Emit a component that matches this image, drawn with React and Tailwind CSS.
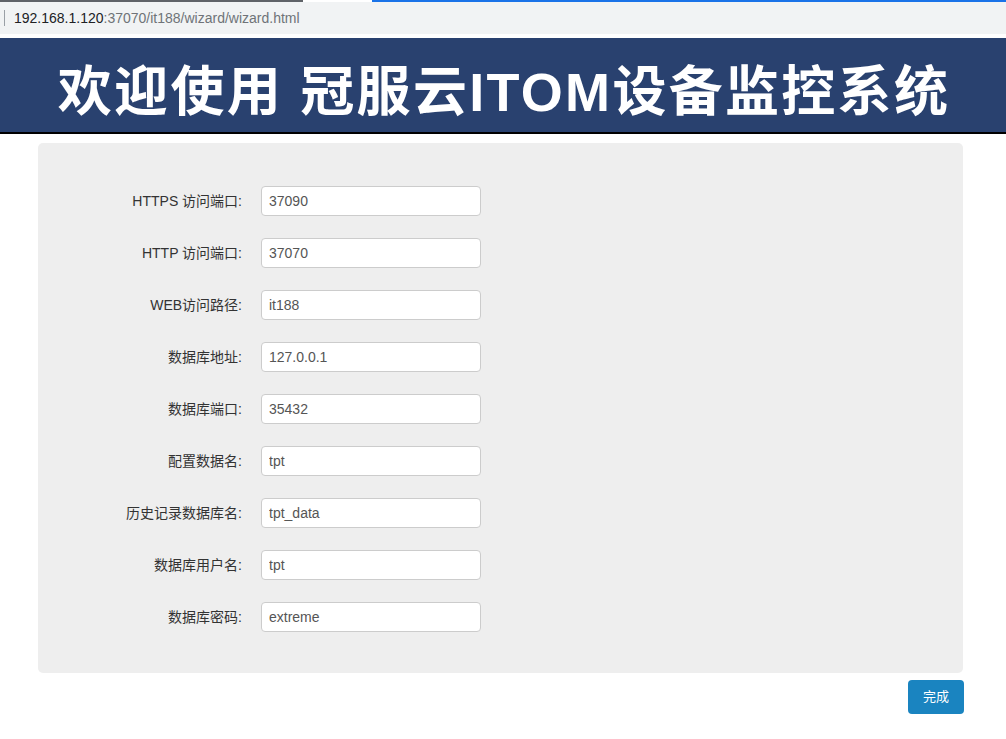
import React from 'react';

const fields = [
  { label: 'HTTPS 访问端口:', value: '37090' },
  { label: 'HTTP 访问端口:', value: '37070' },
  { label: 'WEB访问路径:', value: 'it188' },
  { label: '数据库地址:', value: '127.0.0.1' },
  { label: '数据库端口:', value: '35432' },
  { label: '配置数据名:', value: 'tpt' },
  { label: '历史记录数据库名:', value: 'tpt_data' },
  { label: '数据库用户名:', value: 'tpt' },
  { label: '数据库密码:', value: 'extreme' },
];

const font = { fontFamily: '"Liberation Sans", "Noto Sans CJK SC", sans-serif' };

const App = () => {
  return (
    <div className="min-h-screen bg-white text-[#333]" style={font}>
      {/* browser strip */}
      <div className="flex h-[2px]">
        <div className="w-[303px] bg-[#5f6368]"></div>
        <div className="w-[69px] bg-white"></div>
        <div className="flex-1 bg-[#1a73e8]"></div>
      </div>

      {/* address bar */}
      <div className="flex h-[32px] items-center bg-[#f1f3f4]">
        <div className="ml-[4px] h-[16px] w-px bg-[#9aa0a6]"></div>
        <div className="ml-[9px] text-[14px] leading-none">
          <span className="text-[#202124]">192.168.1.120</span>
          <span className="text-[#6f7378]">:37070/it188/wizard/wizard.html</span>
        </div>
      </div>
      <div className="h-[4px] bg-white"></div>

      {/* header */}
      <div className="flex h-[96px] items-center justify-center border-b-2 border-black bg-[#29416f] pt-[14px]">
        <h1 className="pl-[2px] text-[54px] font-bold leading-none tracking-[2.3px] text-white">
          欢迎使用 冠服云ITOM设备监控系统
        </h1>
      </div>

      {/* form panel */}
      <div className="ml-[38px] mr-[43px] mt-[9px] flex flex-col gap-[22px] rounded-[5px] bg-[#eeeeee] pb-[41px] pt-[43px]">
        {fields.map((f) => (
          <div key={f.label} className="flex items-center">
            <label className="w-[204px] text-right text-[14px] text-[#333]">{f.label}</label>
            <input
              type="text"
              defaultValue={f.value}
              className="ml-[19px] h-[30px] w-[220px] rounded-[4px] border border-[#ccc] bg-white px-[7px] text-[14px] text-[#555] outline-none"
            />
          </div>
        ))}
      </div>

      {/* submit */}
      <div className="mr-[42px] mt-[7px] flex justify-end">
        <button
          type="button"
          className="h-[34px] w-[56px] rounded-[4px] bg-[#1a84c0] text-[13px] text-white"
        >
          完成
        </button>
      </div>
    </div>
  );
};

export default App;
